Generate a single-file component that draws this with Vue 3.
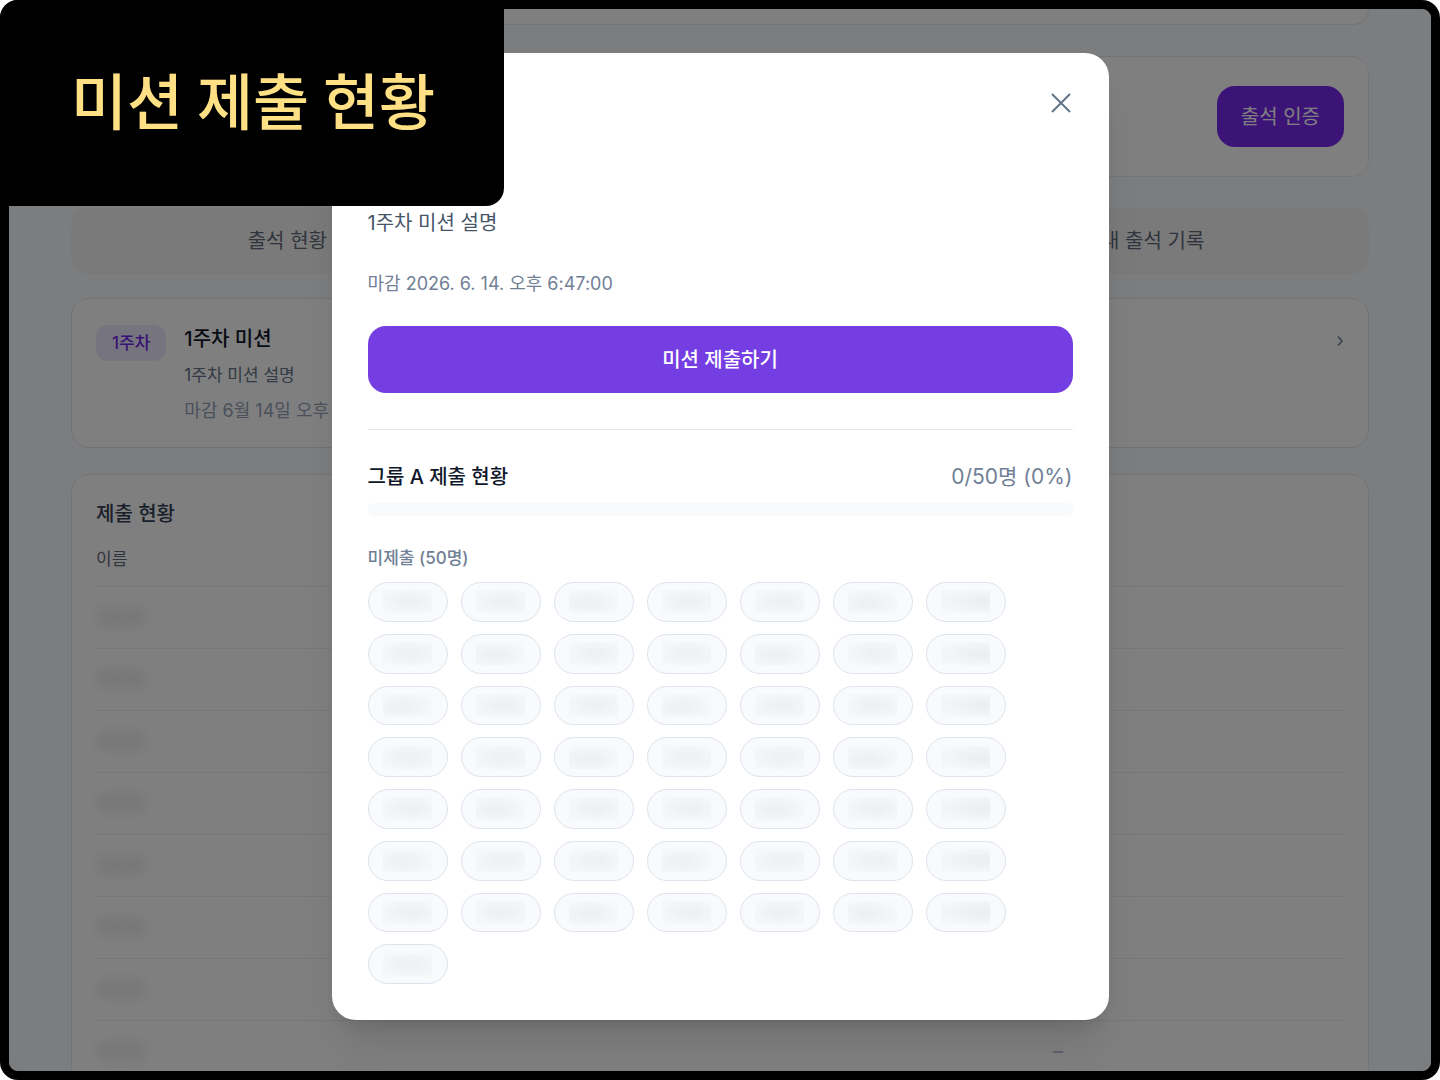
<script setup>
const tableRows = Array.from({ length: 8 }, (_, i) => i)
const pending = Array.from({ length: 50 }, (_, i) => i)
</script>

<template>
  <div class="frame">
    <div class="screen">
      <main class="page">
        <section class="card card-top"></section>

        <section class="card checkin">
          <button type="button" class="checkin-btn">출석 인증</button>
        </section>

        <nav class="tabs">
          <button type="button" class="tab">출석 현황</button>
          <button type="button" class="tab tab-last">내 출석 기록</button>
        </nav>

        <section class="card mission">
          <span class="badge">1주차</span>
          <div class="mission-body">
            <h3>1주차 미션</h3>
            <p class="mission-desc">1주차 미션 설명</p>
            <p class="mission-due">마감 6월 14일 오후 6:47</p>
          </div>
          <svg class="chevron" viewBox="0 0 8 12" width="8" height="12" aria-hidden="true">
            <path d="M2 1.5 L6 6 L2 10.5" fill="none" stroke="currentColor" stroke-width="1.6" />
          </svg>
        </section>

        <section class="card status">
          <h3>제출 현황</h3>
          <table>
            <thead>
              <tr>
                <th scope="col">이름</th>
                <td></td>
              </tr>
            </thead>
            <tbody>
              <tr v-for="row in tableRows" :key="row">
                <td><span class="masked-name"></span></td>
                <td class="mark">–</td>
              </tr>
            </tbody>
          </table>
        </section>
      </main>

      <div class="overlay">
        <div class="modal" role="dialog" aria-modal="true">
          <header class="modal-head">
            <button type="button" class="close" aria-label="닫기">
              <svg viewBox="0 0 24 24" width="24" height="24" aria-hidden="true">
                <path d="M3 4 L21 22 M21 4 L3 22" fill="none" stroke="currentColor" stroke-width="2" />
              </svg>
            </button>
          </header>
          <p class="desc">1주차 미션 설명</p>
          <p class="due">마감 2026. 6. 14. 오후 6:47:00</p>
          <button type="button" class="submit">미션 제출하기</button>
          <hr />
          <div class="group-row">
            <h2>그룹 A 제출 현황</h2>
            <span class="count">0/50명 (0%)</span>
          </div>
          <div class="bar"></div>
          <h4>미제출 (50명)</h4>
          <ul class="chips">
            <li v-for="person in pending" :key="person" class="chip"><span></span></li>
          </ul>
        </div>
      </div>
    </div>

    <h1 class="label">미션 제출 현황</h1>
  </div>
</template>

<style>
body {
  background: #fff;
}
</style>

<style scoped>
* {
  box-sizing: border-box;
  margin: 0;
  padding: 0;
}

.frame {
  position: relative;
  height: 100vh;
  padding: 9px;
  background: #000;
  border-radius: 18px;
  overflow: hidden;
  font-family: Inter, "Noto Sans CJK KR", sans-serif;
  font-size: 20px;
  line-height: 28px;
  color: #0f172a;
}

button {
  border: 0;
  font: inherit;
  cursor: pointer;
}

.screen {
  position: relative;
  height: 100%;
  border-radius: 9px;
  overflow: hidden;
  background: #f9fafc;
}

.page {
  padding: 0 62px;
}

.card {
  background: #fff;
  border: 1px solid #e6e8ee;
  border-radius: 18px;
}

.card-top {
  height: 16px;
  border-top: 0;
  border-radius: 0 0 18px 18px;
}

.checkin {
  display: flex;
  justify-content: flex-end;
  align-items: center;
  margin-top: 31px;
  padding: 29px 24px;
}

.checkin-btn {
  padding: 18px 24px 16px;
  border-radius: 18px;
  background: #7828f0;
  color: #fff;
  line-height: 27px;
}

.tabs {
  display: grid;
  grid-template-columns: repeat(3, 1fr);
  margin-top: 31px;
  border-radius: 18px;
  background: #f4f5f7;
}

.tab {
  height: 66px;
  background: none;
  color: #64697a;
}

.tab-last {
  grid-column: 3;
}

.mission {
  display: flex;
  align-items: flex-start;
  gap: 18px;
  margin-top: 24px;
  padding: 26px 24px 22px;
  border-color: #e2e5f0;
}

.badge {
  padding: 4px 16px;
  border-radius: 12px;
  background: #ede9fe;
  color: #7428e8;
  font-size: 17px;
  font-weight: 500;
}

.mission-body {
  display: flex;
  flex: 1;
  flex-direction: column;
  gap: 8px;
}

h3 {
  font-size: 20px;
  font-weight: 500;
}

.mission-desc {
  color: #64748b;
  font-size: 17px;
}

.mission-due {
  color: #94a3b8;
  font-size: 18px;
}

.chevron {
  margin-top: 10px;
  color: #78839b;
}

.status {
  margin-top: 26px;
  padding: 25px 24px;
}

.status h3 {
  color: #334155;
}

table {
  width: 100%;
  table-layout: fixed;
  border-collapse: collapse;
}

tr {
  height: 62px;
  border-bottom: 1px solid #f0f1f4;
}

thead tr {
  height: 58px;
}

th {
  width: 957px;
  padding-top: 4px;
  text-align: left;
  font-size: 17px;
  font-weight: 400;
  color: #64697a;
}

.mark {
  color: #b4bcc8;
}

.masked-name {
  display: block;
  width: 50px;
  height: 20px;
  border-radius: 8px;
  background: #f0f0f1;
  filter: blur(6px);
}

.overlay {
  position: absolute;
  inset: 0;
  padding: 44px 24px;
  background: rgba(0, 0, 0, 0.5);
}

.modal {
  display: flex;
  flex-direction: column;
  max-width: 777px;
  min-height: 967px;
  margin: 0 auto;
  padding: 36px;
  border-radius: 24px;
  background: #fff;
  box-shadow: 0 30px 38px -8px rgba(0, 0, 0, 0.1), 0 12px 15px -9px rgba(0, 0, 0, 0.1);
}

.modal-head {
  display: flex;
  justify-content: flex-end;
}

.close {
  width: 24px;
  height: 26px;
  background: none;
  color: #64748b;
}

.close svg {
  display: block;
}

.desc {
  margin-top: 92px;
  color: #475569;
  line-height: 32px;
}

.due {
  margin-top: 31px;
  color: #718096;
  font-size: 18px;
}

.submit {
  height: 67px;
  margin-top: 28px;
  border-radius: 18px;
  background: #753ee3;
  color: #fff;
  font-weight: 500;
}

hr {
  margin-top: 36px;
  border: 0;
  border-top: 1px solid #e2e8f0;
}

.group-row {
  display: flex;
  justify-content: space-between;
  margin-top: 31px;
  line-height: 32px;
}

h2 {
  font-size: 20px;
  font-weight: 500;
}

.count {
  color: #718096;
  font-size: 21px;
}

.bar {
  height: 13px;
  margin-top: 10px;
  border-radius: 6px;
  background: #f8fafc;
}

h4 {
  margin-top: 28px;
  color: #718096;
  font-size: 17px;
  font-weight: 500;
}

.chips {
  display: grid;
  flex: 1;
  grid-template-columns: repeat(auto-fill, 80px);
  grid-auto-rows: 1fr;
  gap: 12px 13px;
  margin-top: 10px;
  list-style: none;
}

.chip {
  display: flex;
  align-items: center;
  justify-content: center;
  border: 1px solid #dfe3ed;
  border-radius: 20px;
  background: #f8fafc;
}

.chip span {
  width: 49px;
  height: 23px;
  background: radial-gradient(ellipse at 55% 50%, #eff0f4 15%, #f6f7fa 80%);
}

.chip:nth-child(3n) span {
  background: radial-gradient(ellipse at 40% 55%, #eff0f4 15%, #f7f8fb 80%);
}

.chip:nth-child(7n) span {
  background: radial-gradient(ellipse at 85% 50%, #edeef2 10%, #f6f7fa 80%);
}

.label {
  position: absolute;
  top: 0;
  left: 0;
  padding: 55px 69px 63px 71px;
  border-radius: 0 0 18px 0;
  background: #000;
  color: #ffe084;
  font-family: "Noto Sans CJK KR", sans-serif;
  font-size: 61px;
  font-weight: 500;
  line-height: 88px;
  white-space: nowrap;
}
</style>
